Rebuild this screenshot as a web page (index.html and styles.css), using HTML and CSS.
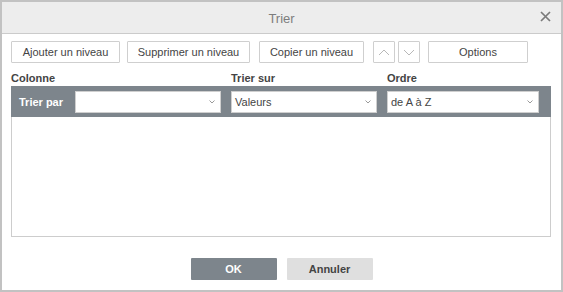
FILE: index.html
```html
<!DOCTYPE html>
<html lang="fr">
<head>
    <meta charset="UTF-8">
    <title>Trier</title>
    <link rel="stylesheet" href="styles.css">
</head>
<body>
    <div class="dialog">
        <div class="header">
            <span class="title">Trier</span>
            <span class="close">
                <svg width="11" height="11" viewBox="0 0 11 11"><path d="M1 1L10 10M10 1L1 10" stroke="#7a7a7a" stroke-width="1.7"/></svg>
            </span>
        </div>

        <div class="content">
            <div class="toolbar">
                <button class="btn btn-add">Ajouter un niveau</button>
                <button class="btn btn-del">Supprimer un niveau</button>
                <button class="btn btn-copy">Copier un niveau</button>
                <button class="btn btn-arrow btn-up">
                    <svg width="12" height="7" viewBox="0 0 12 7"><path d="M1 6L6 1L11 6" fill="none" stroke="#b8b8b8" stroke-width="1"/></svg>
                </button>
                <button class="btn btn-arrow btn-down">
                    <svg width="12" height="7" viewBox="0 0 12 7"><path d="M1 1L6 6L11 1" fill="none" stroke="#b8b8b8" stroke-width="1"/></svg>
                </button>
                <button class="btn btn-options">Options</button>
            </div>

            <div class="labels">
                <span class="lbl lbl-col">Colonne</span>
                <span class="lbl lbl-on">Trier sur</span>
                <span class="lbl">Ordre</span>
            </div>

            <div class="grid">
                <div class="row">
                    <span class="row-label">Trier par</span>
                    <div class="select sel-col">
                        <span class="value"></span>
                        <svg class="caret" width="6" height="4" viewBox="0 0 6 4"><path d="M0.5 0.5L3 3L5.5 0.5" fill="none" stroke="#9a9a9a" stroke-width="1"/></svg>
                    </div>
                    <div class="select sel-on">
                        <span class="value">Valeurs</span>
                        <svg class="caret" width="6" height="4" viewBox="0 0 6 4"><path d="M0.5 0.5L3 3L5.5 0.5" fill="none" stroke="#9a9a9a" stroke-width="1"/></svg>
                    </div>
                    <div class="select sel-order">
                        <span class="value">de A à Z</span>
                        <svg class="caret" width="6" height="4" viewBox="0 0 6 4"><path d="M0.5 0.5L3 3L5.5 0.5" fill="none" stroke="#9a9a9a" stroke-width="1"/></svg>
                    </div>
                </div>
            </div>
        </div>

        <div class="footer">
            <button class="fbtn ok">OK</button>
            <button class="fbtn cancel">Annuler</button>
        </div>
    </div>
</body>
</html>
```

FILE: styles.css
```css
* {
    box-sizing: border-box;
}

body {
    margin: 0;
    font-family: 'Liberation Sans', Arial, sans-serif;
    font-size: 11px;
    color: #444;
    background: #fff;
}

.dialog {
    width: 563px;
    height: 292px;
    border: 2px solid #c2c2c2;
    background: #fff;
    display: flex;
    flex-direction: column;
}

.header {
    height: 32px;
    background: #ededed;
    border-bottom: 1px solid #cbcbcb;
    display: flex;
    align-items: center;
    justify-content: center;
    position: relative;
}

.title {
    font-size: 13px;
    color: #7d7d7d;
    margin-top: 1px;
}

.close {
    position: absolute;
    right: 10px;
    top: 9px;
    display: flex;
}

.content {
    padding: 7px 10px 0 9px;
}

.toolbar {
    display: flex;
    height: 22px;
}

.btn {
    height: 22px;
    background: #fff;
    border: 1px solid #cfcfcf;
    border-radius: 1px;
    font-family: inherit;
    font-size: 11px;
    color: #444;
    padding: 0;
    display: flex;
    align-items: center;
    justify-content: center;
}

.btn-add {
    width: 109px;
}

.btn-del {
    width: 123px;
    margin-left: 7px;
}

.btn-copy {
    width: 105px;
    margin-left: 9px;
}

.btn-arrow {
    width: 22px;
}

.btn-up {
    margin-left: 9px;
}

.btn-down {
    margin-left: 3px;
}

.btn-options {
    width: 100px;
    margin-left: 8px;
}

.labels {
    display: flex;
    height: 23px;
    align-items: flex-end;
    padding-bottom: 2px;
}

.lbl {
    font-weight: bold;
    color: #444;
}

.lbl-col {
    width: 220px;
}

.lbl-on {
    width: 156px;
}

.grid {
    width: 540px;
    height: 151px;
    border: 1px solid #cdcdcd;
    border-top: none;
}

.row {
    height: 31px;
    background: #7d858c;
    margin: 0 -1px;
    display: flex;
    align-items: center;
    padding-left: 8px;
}

.row-label {
    width: 56px;
    color: #fff;
    font-weight: bold;
}

.select {
    height: 22px;
    background: #fff;
    border: 1px solid #cfcfcf;
    display: flex;
    align-items: center;
    justify-content: space-between;
    padding: 0 5px 0 3px;
}

.value {
    color: #444;
}

.caret {
    display: block;
}

.sel-col {
    width: 146px;
}

.sel-on {
    width: 146px;
    margin-left: 10px;
}

.sel-order {
    width: 152px;
    margin-left: 10px;
}

.footer {
    display: flex;
    justify-content: center;
    gap: 10px;
    margin-top: 21px;
}

.fbtn {
    width: 86px;
    height: 22px;
    border: none;
    border-radius: 1px;
    font-family: inherit;
    font-size: 11px;
    font-weight: bold;
    padding: 0;
}

.ok {
    background: #7d858c;
    color: #fff;
}

.cancel {
    background: #dfdfdf;
    color: #444;
}
```
